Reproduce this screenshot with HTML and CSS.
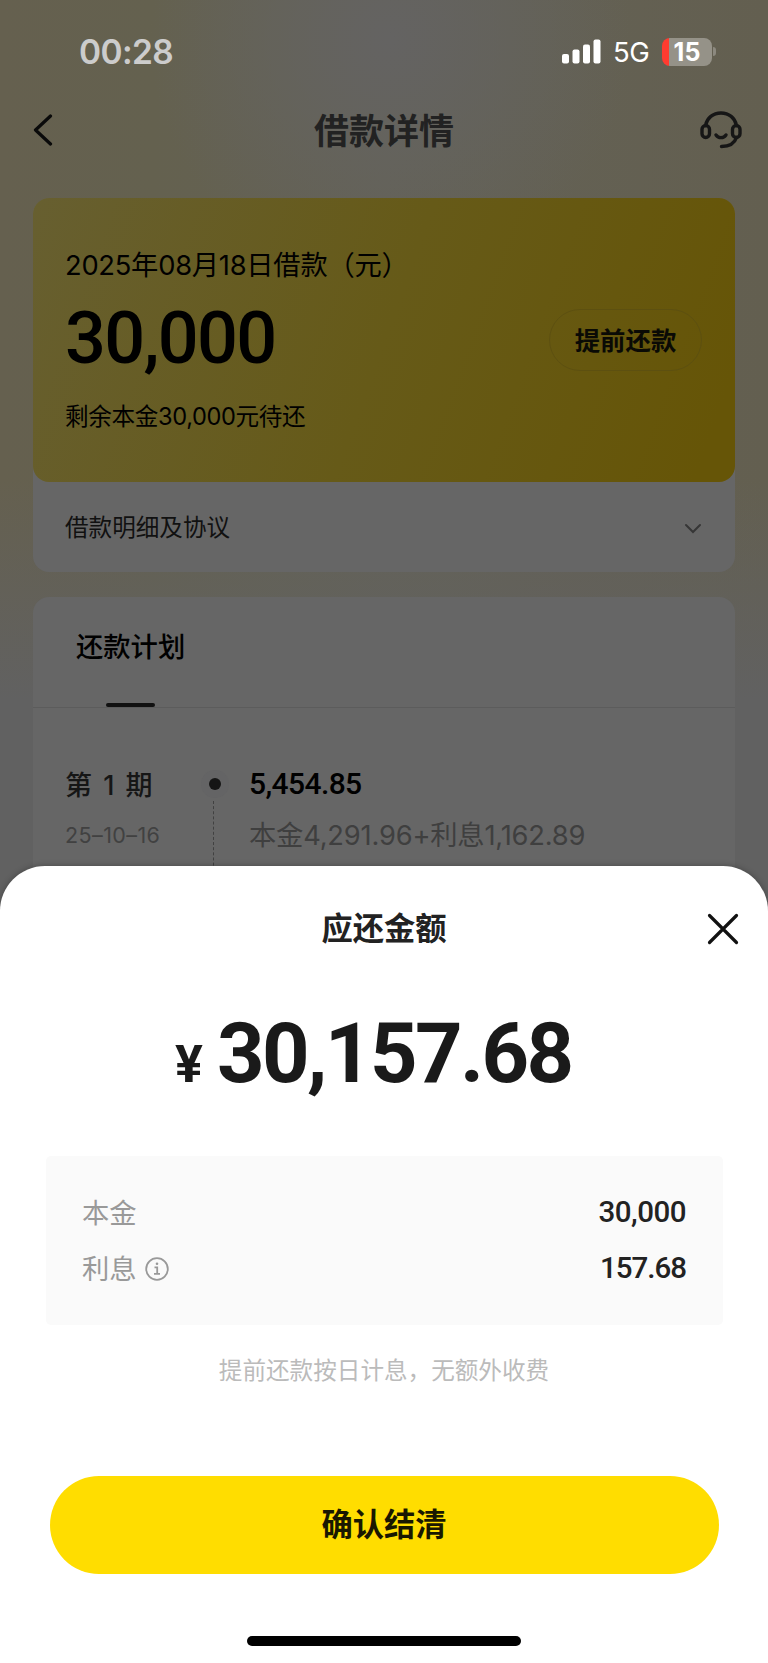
FILE: index.html
```html
<!DOCTYPE html>
<html lang="zh-CN">
<head>
  <meta charset="UTF-8">
  <meta name="viewport" content="width=device-width,initial-scale=1">
  <title>借款详情</title>
  <link rel="stylesheet" href="styles.css">
</head>
<body>

  <div class="detail">
    <div class="status-bar">
      <span class="time">00:28</span>
      <div class="status-icons">
        <svg class="signal" width="39" height="25" viewBox="0 0 39 25" fill="#fff">
          <rect x="0" y="15" width="7" height="9.500" rx="2"/>
          <rect x="10.500" y="10.500" width="7" height="14" rx="2"/>
          <rect x="21" y="5.500" width="7" height="19" rx="2"/>
          <rect x="31.500" y="0.500" width="7" height="24" rx="2"/>
        </svg>
        <span class="network">5G</span>
        <div class="battery"><span>15</span></div>
        <div class="battery-cap"></div>
      </div>
    </div>

    <div class="nav">
      <svg width="20" height="32" viewBox="0 0 20 32" fill="none" stroke="#0a0a0a" stroke-width="3.200" stroke-linecap="round" stroke-linejoin="round">
        <path d="M17.500 2 2.500 16l15 14"/>
      </svg>
      <h1>借款详情</h1>
      <svg class="service" width="42" height="38" viewBox="0 0 42 38" fill="none" stroke="#161616" stroke-width="3.400" stroke-linecap="round">
        <rect x="2" y="14.500" width="7.500" height="12" rx="3.750"/>
        <rect x="32.500" y="14.500" width="7.500" height="12" rx="3.750"/>
        <path d="M5.500 14.500C7 7 13 2 21 2s14 5 15.500 12.500M36.500 26.500C34.500 32.500 29.500 35.500 21.500 35.500M16 24c2.500 3.500 7.500 3.500 10 0"/>
      </svg>
    </div>

    <div class="loan-card">
      <div class="loan-top">
        <div class="loan-info">
          <div class="loan-date">2025年08月18日借款（元）</div>
          <div class="loan-amount">30,000</div>
          <div class="loan-left">剩余本金30,000元待还</div>
        </div>
        <button class="prepay">提前还款</button>
      </div>
      <div class="agreement">
        <span>借款明细及协议</span>
        <svg width="18" height="12" viewBox="0 0 18 12" fill="none" stroke="#363636" stroke-width="2" stroke-linecap="round">
          <path d="M2 2l7 7 7-7"/>
        </svg>
      </div>
    </div>

    <div class="plan-card">
      <div class="tabs"><span class="tab">还款计划</span></div>
      <div class="term">
        <div class="term-left">
          <div class="term-no">第 1 期</div>
          <div class="term-date">25–10–16</div>
        </div>
        <div class="timeline"></div>
        <div class="term-right">
          <div class="term-amount">5,454.85</div>
          <div class="term-desc">本金4,291.96+利息1,162.89</div>
        </div>
      </div>
    </div>
  </div>

  <div class="sheet">
    <div class="sheet-head">
      <h2>应还金额</h2>
      <svg class="close" width="32" height="32" viewBox="0 0 32 32" fill="none" stroke="#111" stroke-width="3.200" stroke-linecap="round">
        <path d="M2.500 2.500l27 27M29.500 2.500l-27 27"/>
      </svg>
    </div>
    <div class="total"><span class="yen">¥</span><span class="total-num">30,157.68</span></div>

    <div class="fees">
      <div class="fee"><span>本金</span><b>30,000</b></div>
      <div class="fee">
        <span>利息</span>
        <svg class="info" width="24" height="24" viewBox="0 0 24 24" fill="none" stroke="#999" stroke-width="1.800">
          <circle cx="12" cy="12" r="10.800"/>
          <path d="M9.500 10.300h2.700v6.500M9 16.900h6"/>
          <circle cx="12" cy="6.800" r="1.300" fill="#999" stroke="none"/>
        </svg>
        <b class="interest">157.68</b>
      </div>
    </div>

    <p class="note">提前还款按日计息，无额外收费</p>
    <button class="confirm">确认结清</button>
    <div class="home-bar"></div>
  </div>

</body>
</html>
```

FILE: styles.css
```css
* {
  box-sizing: border-box;
}

body {
  margin: 0;
  width: 768px;
  height: 1663px;
  overflow: hidden;
  background: #616161;
  font-family: Inter, "Noto Sans CJK SC", sans-serif;
  color: #000;
}

h1, h2, p {
  margin: 0;
  font-weight: 700;
}

button {
  font-family: inherit;
  font-weight: 700;
  padding: 0;
}

/* dimmed page behind the sheet */
.detail {
  height: 911px;
  overflow: hidden;
  background:
    linear-gradient(180deg, rgba(97,97,97,0) 480px, #616161 700px),
    radial-gradient(circle at 390px 40px, #646362 0, rgba(100,99,94,0) 240px),
    linear-gradient(90deg, #65604f, #64614f 20%, #646256 50%, #635f50);
}

.status-bar {
  height: 98px;
  padding: 5px 52px 0 79px;
  display: flex;
  align-items: center;
  justify-content: space-between;
}

.time {
  font-size: 33.500px;
  font-weight: 600;
  letter-spacing: -0.6px;
  color: #ccc;
}

.status-icons {
  display: flex;
  align-items: center;
  color: #fff;
}

.network {
  margin-left: 12px;
  width: 49px;
  font-size: 27.500px;
  line-height: 32px;
  letter-spacing: -0.5px;
}

.battery {
  width: 50px;
  height: 28px;
  border-radius: 8px;
  background: linear-gradient(90deg, #ff3b30 7px, #959288 7px);
  font-size: 25px;
  font-weight: 700;
  line-height: 28px;
  text-align: center;
}

.battery-cap {
  width: 3px;
  height: 9px;
  margin-left: 1px;
  border-radius: 0 4px 4px 0;
  background: #8c897f;
}

.nav {
  height: 100px;
  padding: 0 26px 36px 33px;
  display: flex;
  align-items: center;
  justify-content: space-between;
}

.nav h1 {
  margin: 2px 0 0 15px;
  font-size: 35px;
  line-height: 50px;
  color: #222;
}

.loan-card {
  margin: 0 33px;
  border-radius: 16px;
  background: #666;
}

.loan-top {
  height: 284px;
  padding: 0 33px 0 32px;
  display: flex;
  justify-content: space-between;
  border-radius: 16px;
  background: linear-gradient(110deg, #675f30, #665a18 50%, #665507 95%);
}

.loan-info {
  padding-top: 48px;
}

.loan-date {
  font-size: 27.300px;
  line-height: 40px;
  letter-spacing: -0.25px;
}

.loan-amount {
  margin-top: 11px;
  font-family: Roboto, sans-serif;
  font-size: 72px;
  font-weight: 500;
  line-height: 84px;
  letter-spacing: -1.7px;
}

.loan-left {
  margin-top: 18px;
  font-size: 23.600px;
  line-height: 36px;
  letter-spacing: -0.35px;
}

.prepay {
  width: 153px;
  height: 62px;
  margin-top: 111px;
  padding-bottom: 3px;
  border: 1px solid #5d5010;
  border-radius: 31px;
  background: none;
  font-size: 25.400px;
  color: #0a0a05;
}

.agreement {
  height: 90px;
  padding: 0 33px 0 32px;
  display: flex;
  align-items: center;
  justify-content: space-between;
  font-size: 23.600px;
  color: #111;
}

.agreement span {
  margin-top: -2px;
}

.agreement svg {
  margin-top: 3px;
}

.plan-card {
  height: 400px;
  margin: 25px 33px 0;
  border-radius: 16px;
  background: #666;
}

.tabs {
  height: 111px;
  padding: 31px 43px 0;
  border-bottom: 1px solid #5c5c5c;
}

.tab {
  display: block;
  width: 110px;
  font-size: 27.300px;
  font-weight: 500;
  line-height: 40px;
}

.tab::after {
  content: "";
  display: block;
  width: 49px;
  height: 4px;
  margin: 35px 0 0 30px;
  border-radius: 2px;
  background: #111;
}

.term {
  display: flex;
  padding: 57px 33px 0 32px;
}

.term-left {
  width: 143px;
}

.term-no {
  padding-top: 1px;
  font-size: 27px;
  font-weight: 500;
  line-height: 40px;
  word-spacing: 4px;
  color: #161616;
}

.term-date {
  margin-top: 14px;
  font-size: 21.500px;
  line-height: 30px;
  letter-spacing: 0.4px;
  color: #414141;
}

.timeline {
  width: 41px;
  height: 120px;
}

.timeline::before {
  content: "";
  display: block;
  width: 12px;
  height: 12px;
  margin: 13px 0 11px 1px;
  border-radius: 50%;
  background: #151515;
  box-shadow: 0 0 0 8px #646465;
}

.timeline::after {
  content: "";
  display: block;
  height: 80px;
  margin-left: 5px;
  border-left: 1px dashed #414141;
}

.term-amount {
  font-family: Roboto, sans-serif;
  font-size: 30px;
  font-weight: 500;
  line-height: 38px;
  letter-spacing: -0.6px;
}

.term-desc {
  margin-top: 13px;
  font-size: 27.300px;
  line-height: 40px;
  letter-spacing: -0.2px;
  color: #3f3f3f;
}

/* bottom sheet */
.sheet {
  position: relative;
  height: 797px;
  margin-top: -45px;
  border-radius: 45px 45px 0 0;
  background: #fff;
  box-shadow: 0 0 6px rgba(0,0,0,0.3);
}

.sheet-head {
  height: 124px;
  padding: 2px 29px 0 61px;
  display: flex;
  align-items: center;
}

.sheet-head h2 {
  flex: 1;
  text-align: center;
  font-size: 31.300px;
  line-height: 46px;
  color: #222;
}

.total {
  height: 166px;
  padding: 4px 0 0 175px;
  display: flex;
  align-items: baseline;
  font-family: Roboto, sans-serif;
  font-weight: 700;
  color: #1a1a1a;
}

.yen {
  width: 42px;
  font-size: 52px;
}

.total-num {
  font-size: 83px;
  line-height: 120px;
  letter-spacing: -2.6px;
}

.fees {
  width: 677px;
  height: 169px;
  margin-left: 46px;
  padding: 27px 37px 0 36px;
  border-radius: 5px;
  background: #fafafa;
}

.fee {
  height: 56px;
  display: flex;
  align-items: center;
  font-size: 27.300px;
  color: #999;
}

.fee b {
  margin: 1px 0 0 auto;
  font-family: Roboto, sans-serif;
  font-size: 29.500px;
  font-weight: 500;
  letter-spacing: -0.5px;
  color: #222;
}

.fee .interest {
  letter-spacing: -1px;
}

.info {
  margin: 3px 0 0 8px;
}

.note {
  margin-top: 28px;
  text-align: center;
  font-size: 23.600px;
  font-weight: 400;
  line-height: 36px;
  color: #bbb;
}

.confirm {
  display: block;
  width: 669px;
  height: 98px;
  margin: 87px 0 0 49.500px;
  padding-bottom: 5px;
  border: 0;
  border-radius: 49px;
  background: #fd0;
  font-size: 31.300px;
  color: #1a1800;
}

.home-bar {
  width: 274px;
  height: 10px;
  margin: 62px auto 0;
  border-radius: 5px;
  background: #000;
}
```
